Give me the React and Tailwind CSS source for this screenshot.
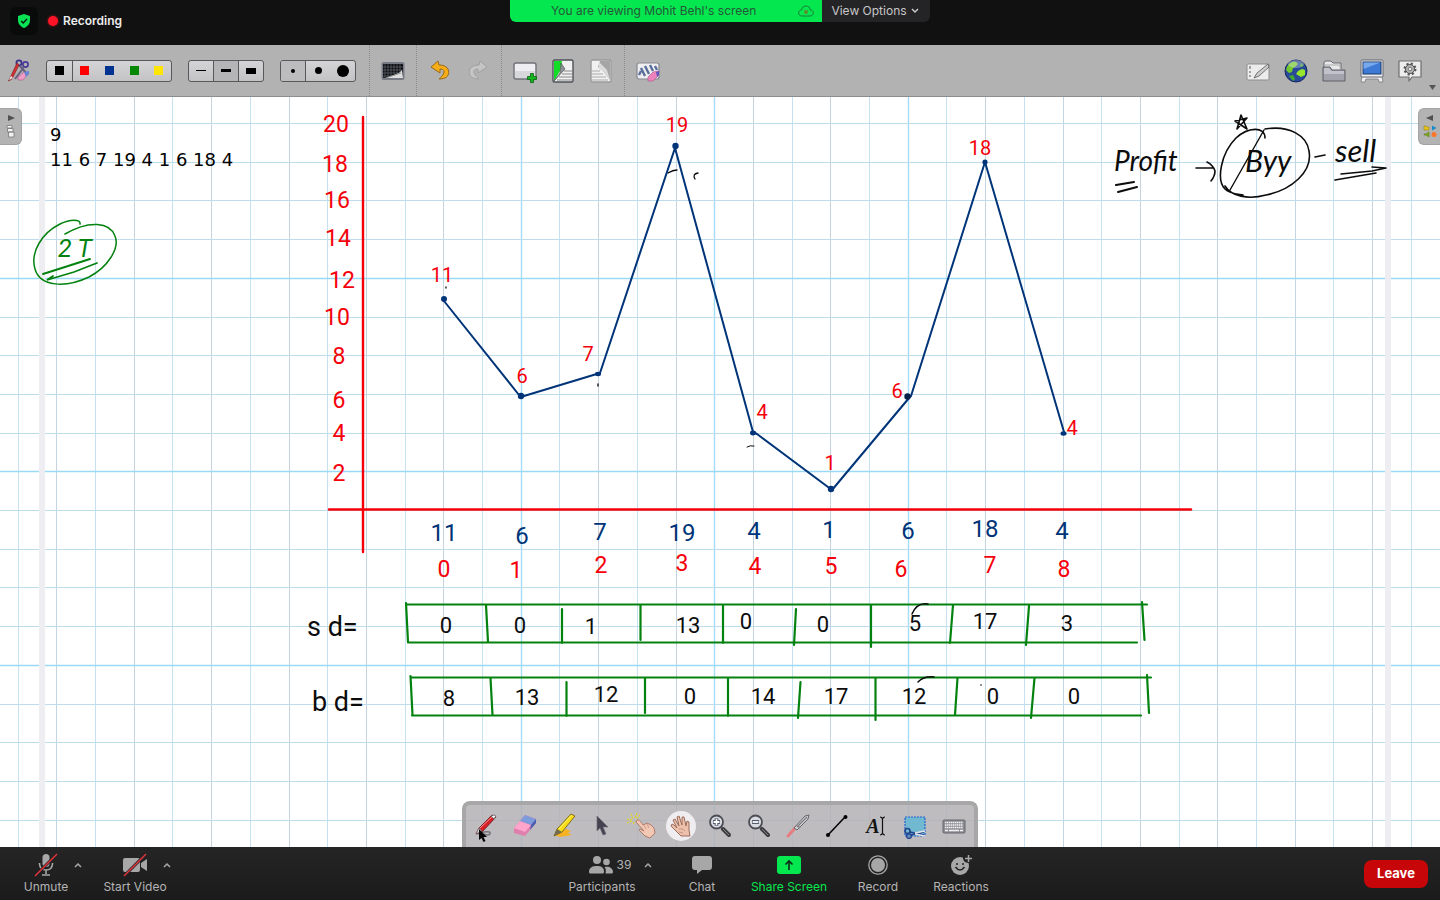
import React from "react";

const RED = "#f5000a";
const NAVY = "#003478";
const GREEN = "#04820f";
const INK = "#0c0c0c";

const verticals = Array.from({ length: 38 }, (_, i) => 18 + Math.round(i * 38.7 - 0.4));
const horizontals = Array.from({ length: 19 }, (_, i) => 123 + Math.round(i * 38.7));
const majorVertical = (i) => i === 13 || i === 18 || i === 23;

const axisLabels = [
  [336, 132, "20"], [335, 172, "18"], [337, 208, "16"], [338, 246, "14"], [342, 288, "12"],
  [337, 325, "10"], [339, 364, "8"], [339, 408, "6"], [339, 441, "4"], [339, 481, "2"],
];
const pointLabels = [
  [442, 282, "11"], [522, 383, "6"], [588, 361, "7"], [677, 132, "19"], [762, 419, "4"],
  [830, 470, "1"], [897, 398, "6"], [980, 155, "18"], [1072, 435, "4"],
];
const valueRow = [
  [444, 541, "11"], [522, 544, "6"], [600, 540, "7"], [682, 541, "19"], [754, 539, "4"],
  [829, 538, "1"], [908, 539, "6"], [985, 537, "18"], [1062, 539, "4"],
];
const indexRow = [
  [444, 577, "0"], [516, 578, "1"], [601, 573, "2"], [682, 571, "3"], [755, 574, "4"],
  [831, 574, "5"], [901, 577, "6"], [990, 573, "7"], [1064, 577, "8"],
];
const sdRow = [
  [446, 633, "0"], [520, 633, "0"], [591, 634, "1"], [688, 633, "13"], [746, 629, "0"],
  [823, 632, "0"], [915, 631, "5"], [985, 629, "17"], [1067, 631, "3"],
];
const bdRow = [
  [449, 706, "8"], [527, 705, "13"], [606, 702, "12"], [690, 704, "0"], [763, 704, "14"],
  [836, 704, "17"], [914, 704, "12"], [993, 704, "0"], [1074, 704, "0"],
];

function Notes({ items, color, size }) {
  return (
    <g fill={color} fontSize={size} textAnchor="middle">
      {items.map(([x, y, t]) => (
        <text key={`${x}-${y}`} x={x} y={y}>{t}</text>
      ))}
    </g>
  );
}

function Board() {
  return (
    <svg viewBox="0 97 1440 750" className="block h-auto w-full" fontFamily="Roboto, sans-serif" aria-label="Whiteboard">
      <g strokeWidth="1" fill="none">
        {verticals.map((x, i) => (
          <path key={x} d={`M${x + 0.5} 97V847`} stroke={majorVertical(i) ? "#a3ddf8" : i % 2 ? "#c3d3e0" : "#c6e2f1"} strokeWidth={majorVertical(i) ? 1.4 : 1} />
        ))}
        {horizontals.map((y, i) => (
          <path key={y} d={`M0 ${y + 0.5}H1440`} stroke={i % 5 === 4 ? "#9bd9f7" : "#bddcec"} strokeWidth={i % 5 === 4 ? 1.4 : 1} />
        ))}
      </g>
      <rect x="39" y="97" width="6" height="750" fill="#eeeef2" />
      <rect x="1385" y="97" width="6" height="750" fill="#eeeef2" />

      <g stroke={RED} strokeWidth="2.4" strokeLinecap="round" fill="none">
        <path d="M363 117V552" />
        <path d="M329 509.5H1191" />
      </g>

      <g stroke={NAVY} strokeWidth="2" strokeLinecap="round" strokeLinejoin="round" fill="none">
        <path d="M444 301L519 395L524 396L600 373L675 148L753 432L757 434L832 490L909 398L911 396L985 162L1064 432" />
      </g>
      <g fill={NAVY}>
        <circle cx="444" cy="299" r="3" />
        <circle cx="521" cy="396" r="3.2" />
        <ellipse cx="598" cy="374" rx="3" ry="2.2" />
        <circle cx="675.500" cy="146" r="3.2" />
        <ellipse cx="753" cy="433" rx="3" ry="2.4" />
        <circle cx="831" cy="489" r="3.2" />
        <circle cx="907.500" cy="396.500" r="3.2" fill="#06204a" />
        <circle cx="985" cy="162" r="2.6" />
        <ellipse cx="1063.500" cy="433.500" rx="3" ry="2.2" />
      </g>
      <g stroke={INK} fill="none" strokeWidth="1.300" strokeLinecap="round">
        <path d="M668 173Q673 170 677 170" />
        <path d="M698 173Q692 174 695 179" />
        <path d="M747 447Q750 445 754 446" strokeWidth="1" />
        <path d="M446 287V288M598 384L598 386" />
      </g>

      <Notes items={axisLabels} color={RED} size="23" />
      <Notes items={pointLabels} color={RED} size="20" />
      <Notes items={valueRow} color={NAVY} size="24" />
      <Notes items={indexRow} color={RED} size="23" />

      <g stroke={GREEN} strokeWidth="2.200" strokeLinecap="round" fill="none">
        <path d="M406 603L408 642M406 604.500H1147M408 642.500H1137M486 605L488 642M562 609V643M640.500 605V640M723 605V643M796 609L794 645M871 605V647M953 605L950 643M1029 606L1026 645M1142 602L1144.500 640" />
        <path d="M410.500 676L412.500 715M411 677.500H1151M412 715.500H1141M490.500 678L492.500 715M566.500 682V716M645 678V713M728 678V716M800.500 682L798 718M875.500 678V720M957.500 678L955 715M1034.500 678L1031 718M1147 675L1149 713" />
      </g>
      <Notes items={sdRow} color={INK} size="22" />
      <Notes items={bdRow} color={INK} size="22" />
      <path d="M912 614Q917 602 928 604M918 682Q924 676 934 677" stroke={INK} strokeWidth="1.500" fill="none" strokeLinecap="round" />
      <g fill={INK} fontSize="27">
        <text x="307" y="636">s d=</text>
        <text x="312" y="711">b d=</text>
      </g>
      <circle cx="981" cy="685" r="0.800" fill={INK} />

      <g stroke={GREEN} strokeWidth="1.500" strokeLinecap="round" fill="none">
        <path d="M80 224C81 219 70 219 60 224C42 233 30 252 35 269C40 287 66 288 89 277C108 267 120 248 115 236C110 222 89 220 65 234" />
        <path d="M43 274L90 259" strokeWidth="2" />
        <path d="M53 276L47 280L74 272L97 263" strokeWidth="1.700" />
      </g>
      <text x="58" y="257" fontSize="25" fill={GREEN} fontStyle="italic">2 T</text>

      <g fill={INK} fontStyle="italic" fontFamily="Lato, sans-serif">
        <text x="1114" y="171" fontSize="28">Profit</text>
        <text x="1245" y="172" fontSize="30">Byy</text>
        <text x="1335" y="162" fontSize="31">sell</text>
      </g>
      <g stroke={INK} strokeWidth="1.600" strokeLinecap="round" strokeLinejoin="round" fill="none">
        <path d="M1116 185L1134 182M1118 192L1137 187" strokeWidth="2" />
        <path d="M1196 168H1213M1207 162Q1213 165 1215 171Q1215 176 1211 181" />
        <path d="M1265 138C1265 126 1248 127 1236 138C1221 153 1216 180 1225 189C1230 194 1237 194 1243 195M1265 129C1290 125 1307 136 1309 151C1313 172 1291 190 1266 195C1248 200 1231 196 1225 186" />
        <path d="M1264 130L1230 190" strokeWidth="1.400" />
        <path d="M1315 157L1325 155" />
        <path d="M1335 180L1376 173M1341 174L1372 171L1386 168L1372 167" />
        <path d="M1237 129L1241 115L1247 129L1235 121L1247 118L1237 129" />
      </g>
    </svg>
  );
}

function ToolSet() {
  return (
    <svg width="24" height="24" viewBox="0 0 24 24" fill="none">
      <circle cx="12" cy="4" r="2.600" stroke="#3d2f8c" strokeWidth="1.700" />
      <circle cx="18.500" cy="5.500" r="2.600" stroke="#4c3a9a" strokeWidth="1.700" />
      <path d="M13 7L20 15M17 8L8 20" stroke="#65607d" strokeWidth="2" />
      <path d="M10 4L3 19L1.500 22L5 20L12 6Z" fill="#d93032" stroke="#7c2429" strokeWidth="0.700" />
      <path d="M2 21L4 17L6 19Z" fill="#eee" />
      <path d="M11 18L17 13L22 14L16 21L11 21Z" fill="#f09ac4" stroke="#a65c86" strokeWidth="0.600" />
      <path d="M17 13L22 12V15L19 18Z" fill="#6684d3" />
    </svg>
  );
}
function GridBoard() {
  return (
    <svg width="24" height="20" viewBox="0 0 24 20">
      <rect x="0.500" y="1" width="23" height="18" rx="2" fill="#777b84" />
      <rect x="2" y="3" width="20" height="14" rx="1" fill="#0c0d10" />
      <path d="M4 3V17M7 3V17M10 3V17M13 3V17M16 3V17M19 3V17M2 6H22M2 9H22M2 12H22M2 15H22" stroke="#71757c" strokeWidth="0.600" />
      <path d="M5 17L13 14L18 12L21 9L22 17Z" fill="#dedede" /><path d="M5 17L20 12" stroke="#999" />
    </svg>
  );
}
function Arrow({ redo }) {
  return (
    <svg width="22" height="22" viewBox="0 0 22 22" className={redo ? "-scale-x-100" : ""}>
      <path d="M9 1L2 7L11 13V9C16 9 17 13 10 19C19 19 21 14 19 9C17 6 14 5 10 5Z" fill={redo ? "#c5c5c5" : "#f6ad16"} stroke={redo ? "#a0a0a0" : "#99681b"} strokeWidth="1" strokeLinejoin="round" />
    </svg>
  );
}
function NewPage() {
  return (
    <svg width="26" height="24" viewBox="0 0 26 24">
      <rect x="2" y="4" width="22" height="16" rx="2" fill="#efeff1" stroke="#6f7178" strokeWidth="1.400" />
      <rect x="3" y="12" width="20" height="7" fill="#d7d7dc" />
      <path d="M18.500 14.500H21.500V17.500H24.500V20.500H21.500V23.500H18.500V20.500H15.500V17.500H18.500Z" fill="#14b51f" stroke="#07620d" strokeWidth="0.800" />
    </svg>
  );
}
function PageTurn({ back }) {
  return (
    <svg width="24" height="24" viewBox="0 0 24 24">
      <rect x="2" y="1" width="20" height="22" rx="1.500" fill="#f1f1f1" stroke={back ? "#9b9b9e" : "#4e5157"} strokeWidth="1.400" />
      {back ? (
        <>
          <path d="M11 2H21V21L14 12L9 8Z" fill="#a5a5a5" />
          <path d="M10 3V10L15 13L21 21L18 11Z" fill="#dadada" />
          <path d="M3 12H11M3 15H14M3 18H17M3 21H19" stroke="#aaa" />
        </>
      ) : (
        <>
          <path d="M3 2H11L9 12L3 22Z" fill="#13dc27" />
          <path d="M10 4L9 14L3 22L14 10Z" fill="#8c9193" stroke="#45494c" strokeWidth="0.600" />
          <path d="M13 12H21M11 15H21M8 18H21M6 21H21" stroke="#888" />
        </>
      )}
    </svg>
  );
}
function ClearPage() {
  return (
    <svg width="26" height="24" viewBox="0 0 26 24">
      <rect x="2" y="4" width="22" height="16" rx="2" fill="#eeeef0" stroke="#85878e" strokeWidth="1.200" />
      <path d="M4 16L6 12M6 9L10 17M10 7L14 15M15 6L18 12M20 7L22 11" stroke="#5a6e9c" strokeWidth="2.400" />
      <path d="M13 18L18 13L24 12L23 17L18 22L13 22Z" fill="#ee82bd" stroke="#a9558a" strokeWidth="0.600" />
      <path d="M21 13L24 12V16L22 18Z" fill="#6554bf" />
    </svg>
  );
}
function BoardIcon() {
  return (
    <svg width="26" height="24" viewBox="0 0 26 24">
      <rect x="2" y="5" width="22" height="16" rx="1" fill="#ececec" stroke="#8d8d8d" />
      <path d="M5 7V10M5 12V14M5 16V18" stroke="#888" strokeWidth="1.500" />
      <path d="M9 19L12 14L23 5L24 8L14 17Z" fill="#ccc" stroke="#666" strokeWidth="0.900" />
    </svg>
  );
}
function Globe() {
  return (
    <svg width="24" height="24" viewBox="0 0 24 24">
      <circle cx="12" cy="12" r="11" fill="#294a99" stroke="#17275f" />
      <path d="M3 8C5 3 10 2 12 3L14 5L11 8L9 9L8 13L5 14L2 11Z" fill="#74c72e" />
      <path d="M14 12L18 10L21 11V16L17 18L12 15Z" fill="#98e52c" />
      <path d="M5 17L9 16L11 20L9 22Z" fill="#42ad2c" /><path d="M17 4L20 7L16 8Z" fill="#46a02d" />
      <ellipse cx="12" cy="5" rx="8" ry="4" fill="#fff" opacity="0.300" />
    </svg>
  );
}
function Folder() {
  return (
    <svg width="26" height="24" viewBox="0 0 26 24">
      <path d="M3 21V4Q3 2 5 2H10L12 4H20V10" fill="#e8e8eb" stroke="#686870" />
      <path d="M4 6H19V9" fill="none" stroke="#aaa" />
      <path d="M2 22V8H9L11 11H24V22Z" fill="#a3a3ae" stroke="#5c5c66" strokeLinejoin="round" />
      <path d="M3 9H8L10 12H23V15H3Z" fill="#c2c2ca" />
    </svg>
  );
}
function Monitor() {
  return (
    <svg width="26" height="24" viewBox="0 0 26 24">
      <path d="M3 17L2 23H6L7 20H19L20 23H24L23 17Z" fill="#ededed" stroke="#797980" strokeWidth="0.800" />
      <rect x="2" y="1" width="22" height="17" rx="1" fill="#eee" stroke="#666972" />
      <rect x="4" y="3" width="18" height="12" fill="#3c7ad6" stroke="#183664" /><path d="M4.500 3.500H21.500L4.500 10Z" fill="#77a9ec" />
    </svg>
  );
}
function SettingsIcon() {
  return (
    <svg width="26" height="24" viewBox="0 0 26 24">
      <path d="M2 2H24V18H15L12 22V18H2Z" fill="#ededed" stroke="#6e6e72" strokeWidth="1.200" strokeLinejoin="round" />
      <circle cx="13" cy="10" r="5" fill="none" stroke="#555" strokeWidth="3" strokeDasharray="2 1.927" />
      <circle cx="13" cy="10" r="4.500" fill="#b3b3b3" stroke="#555" /><circle cx="13" cy="10" r="1.800" fill="#eee" stroke="#666" strokeWidth="0.800" />
    </svg>
  );
}

function ToolButton({ label, children, className = "w-[38px]" }) {
  return (
    <button type="button" aria-label={label} className={`flex h-[38px] shrink-0 items-center justify-center ${className}`}>
      {children}
    </button>
  );
}
function Divider() {
  return <span className="h-[51px] w-px shrink-0 border-l border-dotted border-[#8b8b8b]" />;
}

const groupBox = "flex h-[22px] shrink-0 overflow-hidden rounded-[3px] border border-[#58585a] bg-linear-to-b from-[#d4d3d6] to-[#c3c2c5]";
const colours = [["Black", "bg-black"], ["Red", "bg-[#ff0000]"], ["Blue", "bg-[#003391]"], ["Green", "bg-[#048804]"], ["Yellow", "bg-[#ffe500]"]];
const widths = [["Thin line", "h-px w-[10px]"], ["Medium line", "h-[3px] w-[10px]"], ["Thick line", "h-[6px] w-[10px]"]];
const erasers = [["Small eraser", "size-1"], ["Medium eraser", "size-[7px]"], ["Large eraser", "size-3"]];

function Toolbar() {
  return (
    <div role="toolbar" aria-label="Board" className="relative flex h-[52px] items-center border-b border-[#8d8d8d] bg-[#b2b2b2] pl-[7px] pr-[11px]">
      <ToolButton label="Stylus tools" className="w-6"><ToolSet /></ToolButton>
      <div className={`${groupBox} ml-[15px] w-[126px]`}>
        {colours.map(([name, bg], i) => (
          <button key={name} type="button" aria-label={name} className={`flex flex-1 items-center justify-center ${i === 0 ? "border-r border-[#58585a]" : ""}`}>
            <span className={`size-[9px] ${bg}`} />
          </button>
        ))}
      </div>
      <div className={`${groupBox} ml-4 w-[76px]`}>
        {widths.map(([name, shape], i) => (
          <button key={name} type="button" aria-label={name} className={`flex flex-1 items-center justify-center ${i < 2 ? "border-r border-[#58585a]" : ""} ${i === 1 ? "bg-[#b5b4b7]" : ""}`}>
            <span className={`bg-black ${shape}`} />
          </button>
        ))}
      </div>
      <div className={`${groupBox} ml-4 w-[76px]`}>
        {erasers.map(([name, shape], i) => (
          <button key={name} type="button" aria-label={name} className={`flex flex-1 items-center justify-center ${i === 0 ? "border-r border-[#58585a] bg-[#bcbbbd]" : ""}`}>
            <span className={`rounded-full bg-black ${shape}`} />
          </button>
        ))}
      </div>
      <div className="ml-[13px] flex items-center">
        <Divider />
        <ToolButton label="Background" className="w-[46px]"><GridBoard /></ToolButton>
        <Divider />
        <div className="flex px-1">
          <ToolButton label="Undo"><Arrow /></ToolButton>
          <ToolButton label="Redo"><Arrow redo /></ToolButton>
        </div>
        <Divider />
        <div className="flex px-1">
          <ToolButton label="New page"><NewPage /></ToolButton>
          <ToolButton label="Previous page"><PageTurn /></ToolButton>
          <ToolButton label="Next page"><PageTurn back /></ToolButton>
        </div>
        <Divider />
        <div className="flex px-1"><ToolButton label="Clear page"><ClearPage /></ToolButton></div>
      </div>
      <div className="ml-auto flex">
        <ToolButton label="Board"><BoardIcon /></ToolButton>
        <ToolButton label="Web"><Globe /></ToolButton>
        <ToolButton label="Documents"><Folder /></ToolButton>
        <ToolButton label="Show desktop"><Monitor /></ToolButton>
        <ToolButton label="Settings"><SettingsIcon /></ToolButton>
      </div>
      <svg width="7" height="5" viewBox="0 0 7 5" className="absolute bottom-1.5 right-1"><path d="M0 0H7L3.500 5Z" fill="#555" /></svg>
    </div>
  );
}

function Magnifier({ plus }) {
  return (
    <svg width="26" height="26" viewBox="0 0 26 26" fill="none">
      <path d="M14 14L17 17" stroke="#777" strokeWidth="3" />
      <path d="M16 16L22 22" stroke="#3d3d3f" strokeWidth="4" strokeLinecap="round" />
      <path d="M16 16L22 22" stroke="#838385" strokeWidth="1" />
      <circle cx="9.500" cy="9" r="6.500" fill="#d8dae2" stroke="#4c4d54" strokeWidth="1.800" />
      <path d={plus ? "M6 9H13M9.500 5.500V12.500" : "M6 9H13"} stroke="#333a50" strokeWidth="3.600" />
      <path d={plus ? "M6.500 9H12.500M9.500 6V12" : "M6.500 9H12.500"} stroke="#fff" strokeWidth="1.800" />
    </svg>
  );
}

const palette = [
  ["Pen", (
    <svg width="26" height="26" viewBox="0 0 26 26" fill="none">
      <path d="M4 21C8 19 19 17 17 21Q15 23 11 21" stroke="#77747b" strokeWidth="1.500" />
      <path d="M3 21L6 15L19 2L23 4L10 18Z" fill="#d61f26" stroke="#6d1c22" strokeWidth="0.800" />
      <path d="M7 15L20 3" stroke="#ff9094" strokeWidth="1" /><path d="M18 3L21 2L23 3L21 6Z" fill="#eee" stroke="#555" strokeWidth="0.700" />
      <path d="M3 21L6 15L9 18Z" fill="#dedede" stroke="#555" strokeWidth="0.500" />
    </svg>
  )],
  ["Eraser", (
    <svg width="26" height="26" viewBox="0 0 26 26">
      <path d="M2 15L13 2L24 6V10L13 23L2 20Z" fill="#df7fad" />
      <path d="M2 15L8 8L19 12L13 19Z" fill="#ffa5cc" /><path d="M8 8L13 2L24 6L19 12Z" fill="#7e9bdc" /><path d="M19 12L24 6V10L18 17Z" fill="#455eb0" />
    </svg>
  )],
  ["Highlighter", (
    <svg width="26" height="26" viewBox="0 0 26 26">
      <path d="M3 22L15 16L20 18L17 20L21 22L9 24Z" fill="#f7b224" />
      <path d="M3 23L6 16L20 1L24 3L11 19Z" fill="#f9dc16" stroke="#756315" strokeWidth="0.900" /><path d="M3 23L6 16L11 19Z" fill="#6f6b51" /><path d="M8 16L21 2" stroke="#fff17a" />
    </svg>
  )],
  ["Select", (
    <svg width="26" height="26" viewBox="0 0 26 26"><path d="M7 3L18 14L13 14L16 21L13 22L10 15L7 18Z" fill="#45434f" stroke="#706d7a" strokeWidth="0.700" /></svg>
  )],
  ["Interact", (
    <svg width="34" height="28" viewBox="0 0 34 28">
      <path d="M6 2L8 7M12 1L10 6M2 7L7 8M15 3L11 7M2 11L7 9M11 9L14 11M9 10L8 13" stroke="#e3d824" strokeWidth="1.200" strokeDasharray="2 1" />
      <path d="M12 8C14 7 16 10 18 13L22 11L26 13L29 16L30 21L25 26L20 24L14 18Q14 16 19 19L11 10Z" fill="#f2c7b4" stroke="#a87564" strokeWidth="0.900" />
      <path d="M19 13L21 17M22 12L24 16" stroke="#b98270" strokeWidth="0.600" />
    </svg>
  )],
  ["Hand", (
    <span className="flex size-[30px] items-center justify-center rounded-full bg-[#efedef]">
      <svg width="24" height="24" viewBox="0 0 24 24">
        <path d="M12 22L6 16L2 12L3 10L5 11L8 14L4 6L6 5L10 12L8 3L10 2L13 11L13 3L15 3L17 12L18 7L20 8L20 16L21 22Z" fill="#edc0ac" stroke="#9c6c5b" strokeWidth="1" strokeLinejoin="round" />
        <path d="M10 15Q14 14 16 17M10 18L14 19" fill="none" stroke="#b98270" strokeWidth="0.700" />
      </svg>
    </span>
  )],
  ["Zoom in", <Magnifier plus />],
  ["Zoom out", <Magnifier />],
  ["Laser pointer", (
    <svg width="26" height="26" viewBox="0 0 26 26">
      <path d="M3 23L11 14" stroke="#e77d80" strokeWidth="3" strokeLinecap="round" />
      <path d="M9 15L20 3L24 2L23 6L12 17Z" fill="#d4d4d6" stroke="#65656b" /><path d="M12 14L22 4M13 13L15 15" stroke="#77777d" strokeWidth="1.200" />
    </svg>
  )],
  ["Line", (
    <svg width="26" height="26" viewBox="0 0 26 26"><path d="M4 22L21 4" stroke="#000" strokeWidth="1.500" /><circle cx="4" cy="22" r="2" /><circle cx="21.500" cy="4" r="2" /></svg>
  )],
  ["Text", (
    <span className="flex items-center font-['Liberation_Serif',serif] text-xl leading-none text-[#151515]">
      <span className="font-bold italic">A</span>
      <svg width="7" height="20" viewBox="0 0 7 20"><path d="M1 1Q3 1 3.500 3Q4 1 6 1M3.500 3V17M1 19Q3 19 3.500 17Q4 19 6 19" fill="none" stroke="#111" strokeWidth="1.200" /></svg>
    </span>
  )],
  ["Capture", (
    <svg width="26" height="26" viewBox="0 0 26 26" fill="none">
      <rect x="3" y="4" width="20" height="19" fill="#71b9d0" stroke="#2360d0" strokeWidth="1.200" strokeDasharray="2 1" />
      <circle cx="5.500" cy="18" r="2.500" stroke="#22458e" strokeWidth="1.600" /><circle cx="7" cy="23" r="2.300" stroke="#22458e" strokeWidth="1.600" />
      <path d="M8 19L22 22M9 22L22 19" stroke="#22458e" strokeWidth="1.600" /><path d="M13 20L23 18M13 21L23 23" stroke="#e5e5e9" strokeWidth="1.400" />
    </svg>
  )],
  ["Keyboard", (
    <svg width="26" height="26" viewBox="0 0 26 26">
      <rect x="2" y="7" width="22" height="13" rx="1" fill="#8d8d94" stroke="#66666d" />
      <path d="M4 9.500H22M4 12H22M4 14.500H22" stroke="#f1f1f3" strokeWidth="1.500" strokeDasharray="1.500 0.500" /><path d="M4 17.500H7M8 17.500H18M19 17.500H22" stroke="#f1f1f3" strokeWidth="1.500" />
    </svg>
  )],
];

function Caret({ label, className = "" }) {
  return (
    <button type="button" aria-label={label} className={`flex h-5 w-4 shrink-0 items-center justify-center ${className}`}>
      <svg width="8" height="6" viewBox="0 0 8 6"><path d="M1 5L4 2L7 5" fill="none" stroke="#a9a9a9" strokeWidth="1.500" /></svg>
    </button>
  );
}

function CallButton({ label, className, children }) {
  return (
    <button type="button" className={`flex shrink-0 flex-col items-center whitespace-nowrap text-xs leading-4 ${className}`}>
      <span className="flex h-6 items-center justify-center">{children}</span>
      <span className="mt-0.5">{label}</span>
    </button>
  );
}

export default function App() {
  return (
    <div className="flex min-h-screen w-full flex-col overflow-hidden bg-[#111] font-['Inter',sans-serif]">
      <header className="relative flex h-[45px] items-center bg-[#111] pb-[3px] pl-[10px]">
        <button type="button" aria-label="Encryption" className="flex size-7 items-center justify-center rounded-md bg-[#090b0a]">
          <svg width="14" height="14" viewBox="0 0 14 14"><path d="M7 0L13 2V6C13 10 10.500 12.500 7 14C3.500 12.500 1 10 1 6V2Z" fill="#07e353" /><path d="M4.200 7L6.200 9L10 5" fill="none" stroke="#0b160e" strokeWidth="1.400" /></svg>
        </button>
        <span className="ml-[10px] size-[10px] rounded-full bg-[#ff1427] shadow-[0_0_3px_#ff142799]" />
        <span className="ml-[5px] text-xs font-semibold text-[#ededed]">Recording</span>
        <div className="absolute inset-x-0 top-0 mx-auto flex h-[22px] w-[420px] overflow-hidden rounded-b-md text-xs">
          <div className="flex w-[312px] items-center bg-[#05e74f] pl-[41px] text-[#245838]">
            <p>You are viewing Mohit Behl's screen</p>
            <svg width="16" height="12" viewBox="0 0 16 12" className="ml-auto mr-2"><path d="M4 11C1.500 11 .7 9.500 .7 8C.7 6 2 5 3.500 5C4 2.500 5.500 1 8 1S12 2.500 12.300 5C14 5 15.300 6 15.300 8C15.300 9.500 14 11 12 11Z" fill="none" stroke="#187e38" /><circle cx="8" cy="7" r="2" fill="#5e8a30" /></svg>
          </div>
          <button type="button" className="flex flex-1 items-center justify-center gap-1 bg-[#242427] pr-0.5 text-[#c7c7c7]">
            View Options
            <svg width="8" height="6" viewBox="0 0 8 6"><path d="M1 1L4 4L7 1" fill="none" stroke="#c7c7c7" strokeWidth="1.500" /></svg>
          </button>
        </div>
      </header>

      <Toolbar />

      <main className="relative flex-1 overflow-hidden bg-white">
        <Board />
        <div className="absolute left-[50px] top-[25px] font-['DejaVu_Sans',sans-serif] text-lg leading-[25px] text-black">
          <p>9</p>
          <p>11 6 7 19 4 1 6 18 4</p>
        </div>
        <button type="button" aria-label="Open page panel" className="absolute left-0 top-[11px] flex h-[37px] w-[22px] flex-col items-center justify-center gap-1 rounded-r-md border border-l-0 border-[#a3a3a3] bg-[#b3b3b3]">
          <svg width="8" height="6" viewBox="0 0 8 6"><path d="M1 0L8 3L1 6Z" fill="#505050" /></svg>
          <svg width="9" height="13" viewBox="0 0 9 13"><path d="M1 .5H6V3H1ZM1.500 3.500H7V7H1.500ZM2.500 7H8V12H2.500Z" fill="#f2f2f2" stroke="#777" strokeWidth="0.800" /></svg>
        </button>
        <button type="button" aria-label="Open library panel" className="absolute right-0 top-[11px] flex h-[37px] w-[22px] flex-col items-center justify-center gap-1 rounded-l-md border border-r-0 border-[#a3a3a3] bg-[#b3b3b3]">
          <svg width="8" height="6" viewBox="0 0 8 6"><path d="M7 0L0 3L7 6Z" fill="#505050" /></svg>
          <svg width="14" height="13" viewBox="0 0 14 13"><path d="M1 1H3L4 2H6V5H1Z" fill="#e7c422" stroke="#9b8416" strokeWidth="0.600" /><path d="M9 .5L13.500 3L9 5.500Z" fill="#168bc9" /><path d="M6 7V12L3 10H1V9H3Z" fill="#7daa15" stroke="#617b1b" strokeWidth="0.600" /><circle cx="11" cy="9.500" r="2.500" fill="#ff762a" /></svg>
        </button>
        <div role="toolbar" aria-label="Drawing tools" className="absolute inset-x-0 bottom-0 mx-auto flex h-[46px] w-[516px] items-center rounded-t-lg border-4 border-b-0 border-[#a7a7a8] bg-[#b3b0b4]/85">
          {palette.map(([name, icon]) => (
            <button key={name} type="button" aria-label={name} className="flex h-full min-w-0 flex-1 items-center justify-center">{icon}</button>
          ))}
          <svg width="10" height="14" viewBox="0 0 10 14" className="absolute bottom-1 left-3"><path d="M1 0L9 8H5.500L7.500 12L5.500 13L3.500 9L1 11Z" fill="#050505" /></svg>
        </div>
      </main>

      <footer className="flex h-[53px] items-start justify-between bg-linear-to-b from-[#252525] to-[#1b1b1b] pr-3 pt-[6px] text-[#b4b4b4]">
        <div className="flex items-start pl-[22px] pr-[31px]">
          <CallButton label="Unmute" className="w-12">
            <svg width="24" height="24" viewBox="0 0 24 24" fill="none"><rect x="8.500" y="1" width="7" height="13" rx="3.500" fill="#a7a7a7" /><path d="M5.500 10V11Q6 17 12 17T18.500 11V10M12 17V21M8 22H16" stroke="#a7a7a7" strokeWidth="1.600" /><path d="M1 23L23 1" stroke="#222" strokeWidth="3" /><path d="M1 23L23 1" stroke="#e7353c" strokeWidth="1.500" /></svg>
          </CallButton>
          <Caret label="Audio options" className="mt-0.5" />
          <CallButton label="Start Video" className="ml-[17px] w-16">
            <svg width="26" height="24" viewBox="0 0 26 24"><rect x="1" y="5" width="17" height="14" rx="2" fill="#a7a7a7" /><path d="M19 10L25 6V18L19 14Z" fill="#a7a7a7" /><path d="M2 23L24 1" stroke="#222" strokeWidth="3" /><path d="M2 23L24 1" stroke="#e7353c" strokeWidth="1.500" /></svg>
          </CallButton>
          <Caret label="Video options" className="-ml-2 mt-0.5" />
        </div>
        <div className="flex items-start">
          <CallButton label="Participants" className="w-[68px]">
            <span className="flex items-center gap-1 pl-4"><svg width="24" height="18" viewBox="0 0 24 18" fill="#a7a7a7"><circle cx="8" cy="4" r="4" /><path d="M0 16C0 11 4 10 8 10S15 11 15 16Q15 17.500 13.500 17.500H1.500Q0 17.500 0 16Z" /><circle cx="17.500" cy="6" r="3.300" /><path d="M15.500 11C20 10 24 12 24 16Q24 17.500 22.500 17.500H16.500Q17.500 13 15.500 11Z" /></svg>39</span>
          </CallButton>
          <Caret label="Participant options" className="ml-1 mr-1.5 mt-0.5" />
          <CallButton label="Chat" className="w-20">
            <svg width="20" height="18" viewBox="0 0 20 18"><path d="M3 0H17Q20 0 20 3V11Q20 14 17 14H10L5 18V14H3Q0 14 0 11V3Q0 0 3 0Z" fill="#a7a7a7" /></svg>
          </CallButton>
          <CallButton label="Share Screen" className="w-[94px] text-[#05e74f]">
            <svg width="24" height="18" viewBox="0 0 24 18"><rect width="24" height="18" rx="3" fill="#05e74f" /><path d="M12 14V5M8.500 8.500L12 5L15.500 8.500" fill="none" stroke="#102817" strokeWidth="1.600" /></svg>
          </CallButton>
          <CallButton label="Record" className="w-[84px]">
            <svg width="20" height="20" viewBox="0 0 20 20"><circle cx="10" cy="10" r="9.200" fill="none" stroke="#a7a7a7" strokeWidth="1.300" /><circle cx="10" cy="10" r="7" fill="#a7a7a7" /></svg>
          </CallButton>
          <CallButton label="Reactions" className="w-[82px]">
            <svg width="22" height="22" viewBox="0 0 22 22"><circle cx="10" cy="12" r="9" fill="#a7a7a7" /><circle cx="18" cy="4" r="5" fill="#222" /><path d="M18.500 1V8M15 4.500H22" stroke="#a7a7a7" strokeWidth="1.500" /><circle cx="7" cy="10" r="1" fill="#222" /><circle cx="13" cy="10" r="1" fill="#222" /><path d="M5.500 13Q10 19 14.500 13" fill="none" stroke="#222" strokeWidth="1.500" /></svg>
          </CallButton>
        </div>
        <button type="button" className="mt-[7px] h-7 w-16 rounded-lg bg-[#c70609] text-[13px] font-bold text-white">Leave</button>
      </footer>
    </div>
  );
}
